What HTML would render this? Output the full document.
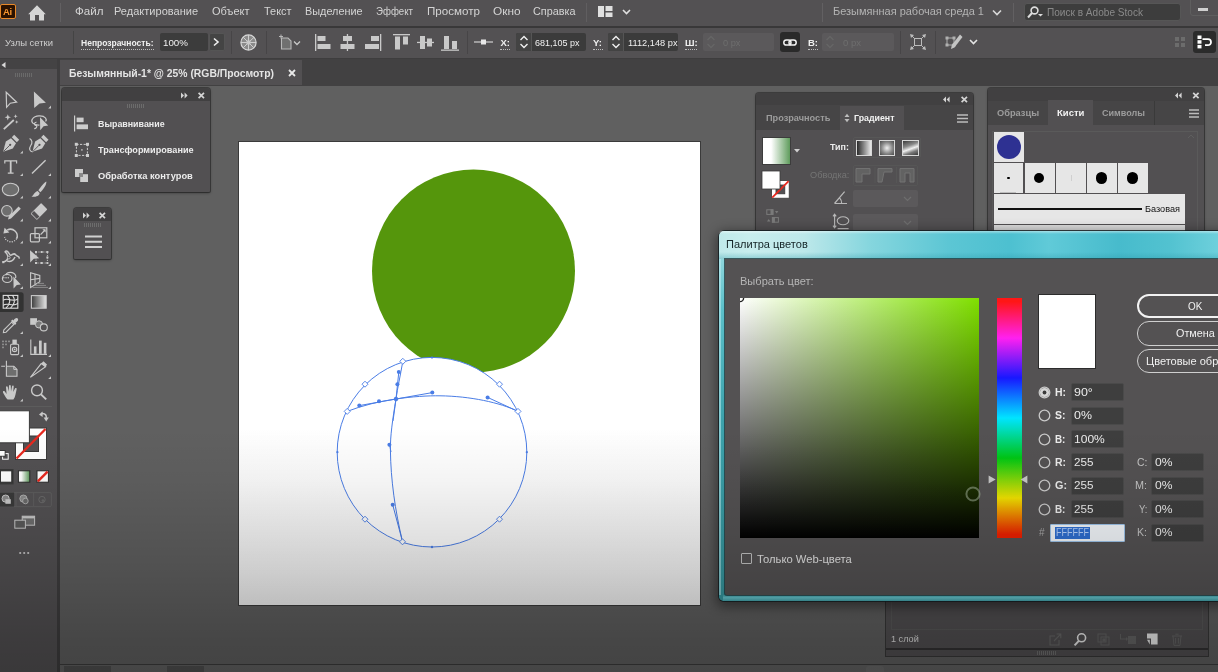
<!DOCTYPE html>
<html lang="ru">
<head>
<meta charset="utf-8">
<title>Illustrator</title>
<style>
*{box-sizing:border-box;margin:0;padding:0}
html,body{width:1218px;height:672px;overflow:hidden;background:#606060;font-family:"Liberation Sans",sans-serif;}
#root{position:relative;width:1218px;height:672px;overflow:hidden;background:#606060;color:#e6e6e6;font-size:11px;filter:blur(0.45px)}
.abs{position:absolute}
.t{position:absolute;white-space:nowrap;line-height:1;transform-origin:0 50%}
svg{position:absolute;overflow:visible}
/* bars */
#menubar{left:0;top:0;width:1218px;height:27px;background:#535153}
#menuline{left:0;top:26px;width:1218px;height:1.5px;background:#393839}
#ctrlbar{left:0;top:27.5px;width:1218px;height:31px;background:#535153}
#tabstrip{left:0;top:58.5px;width:1218px;height:27.5px;background:#424142}
#tabline{left:0;top:58px;width:1218px;height:1px;background:#3e3d3e}
#doctab{left:60px;top:60px;width:242px;height:25px;background:#525052}
#toolbar{left:0;top:69px;width:58px;height:603px;background:#535153}
#toolhead{left:0;top:59px;width:58px;height:11px;background:#444344}
#tooledge{left:57px;top:59px;width:3px;height:613px;background:#3f3e3f}
.mi{top:6px;font-size:11.5px;color:#d4d4d4}
.sep{position:absolute;width:1px;background:#474547}
.fld{position:absolute;background:#3c3c3c;border-radius:2px}
.fldd{position:absolute;background:#5b595b;border-radius:2px}
</style>
</head>
<body>
<div id="root">

<!-- ===== canvas & artboard ===== -->
<div class="abs" id="artboard" style="left:238px;top:141px;width:463px;height:465px;background:#3a3a3a"></div>
<div class="abs" style="left:239px;top:142px;width:461px;height:463px;background:linear-gradient(180deg,#ffffff 0px,#ffffff 288px,#f3f3f3 463px)"></div>
<svg id="art" style="left:0;top:0" width="1218" height="672" viewBox="0 0 1218 672">
  <circle cx="473.5" cy="271" r="101.5" fill="#55960c"/>
  <circle cx="432" cy="452.2" r="94.8" fill="#ffffff"/>
  <g fill="none" stroke="#4a7de6" stroke-width="1">
    <circle cx="432" cy="452.2" r="94.8"/>
    <path d="M347.2 411.4 C362 405.5 380 401.2 396 399 C412 396.6 428 395.6 440 395.8 C470 396.2 500 402.5 518 411.4"/>
    <path d="M402.8 361.3 C400.5 375 397.5 388 396 399 C392.5 420 390.2 436 390.4 450 C390.8 480 395 510 402.5 541.6"/>
  </g>
  <g fill="none" stroke="#4a7de6" stroke-width="1">
    <path d="M398.8 372 L396 399 L393 421"/>
    <path d="M359.3 405.6 L396 399 L432.3 392.6"/>
    <path d="M487.6 397.4 L518 411.4"/>
    <path d="M392.7 504.7 L402.5 541.6"/>
    <path d="M389.6 444.8 L391 452"/>
  </g>
  <circle cx="398.8" cy="372" r="2" fill="#4a7de6"/><circle cx="397.4" cy="384.2" r="2" fill="#4a7de6"/><circle cx="359.3" cy="405.6" r="2" fill="#4a7de6"/><circle cx="379" cy="401.3" r="2" fill="#4a7de6"/><circle cx="396" cy="399" r="2.2" fill="#4a7de6"/><circle cx="432.3" cy="392.6" r="2" fill="#4a7de6"/><circle cx="487.6" cy="397.4" r="2" fill="#4a7de6"/><circle cx="389.4" cy="444.8" r="2" fill="#4a7de6"/><circle cx="392.7" cy="504.7" r="2" fill="#4a7de6"/>
  <circle cx="337.4" cy="452.2" r="1.1" fill="#4a7de6"/><circle cx="526.8" cy="452.2" r="1.1" fill="#4a7de6"/><circle cx="432" cy="357.6" r="1.1" fill="#4a7de6"/><circle cx="432" cy="547" r="1.2" fill="#4a7de6"/>
  <path d="M365.0 381.2 L368.0 384.2 L365.0 387.2 L362.0 384.2 Z" fill="#fff" stroke="#4a7de6" stroke-width="0.9"/><path d="M499.5 381.2 L502.5 384.2 L499.5 387.2 L496.5 384.2 Z" fill="#fff" stroke="#4a7de6" stroke-width="0.9"/><path d="M365.0 516.2 L368.0 519.2 L365.0 522.2 L362.0 519.2 Z" fill="#fff" stroke="#4a7de6" stroke-width="0.9"/><path d="M499.5 516.2 L502.5 519.2 L499.5 522.2 L496.5 519.2 Z" fill="#fff" stroke="#4a7de6" stroke-width="0.9"/><path d="M347.2 408.4 L350.2 411.4 L347.2 414.4 L344.2 411.4 Z" fill="#fff" stroke="#4a7de6" stroke-width="0.9"/><path d="M518.0 408.4 L521.0 411.4 L518.0 414.4 L515.0 411.4 Z" fill="#fff" stroke="#4a7de6" stroke-width="0.9"/><path d="M402.8 358.3 L405.8 361.3 L402.8 364.3 L399.8 361.3 Z" fill="#fff" stroke="#4a7de6" stroke-width="0.9"/><path d="M402.5 538.8 L405.5 541.8 L402.5 544.8 L399.5 541.8 Z" fill="#fff" stroke="#4a7de6" stroke-width="0.9"/>
</svg>

<!-- ===== top bars ===== -->
<div class="abs" id="menubar"></div>
<div class="abs" id="menuline"></div>
<div class="abs" id="ctrlbar"></div>
<div class="abs" id="tabstrip"></div>
<div class="abs" id="tabline"></div>
<div class="abs" id="doctab"></div>
<div class="abs" id="toolhead"></div>
<div class="abs" id="toolbar"></div>
<div class="abs" id="tooledge"></div>

<!-- ===== menu bar ===== -->
<div class="abs" style="left:-0.5px;top:4px;width:16px;height:14.5px;background:#2b1200;border:1.3px solid #e8892a;border-radius:2px"></div>
<div class="t" style="left:3px;top:6.5px;font-size:9.5px;font-weight:bold;color:#f7952e;letter-spacing:-0.3px">Ai</div>
<svg style="left:28px;top:4.5px" width="18" height="16" viewBox="0 0 18 16"><path d="M9 0.3 L0.2 9.2 H2 V15.6 H7 V10 H11 V15.6 H16 V9.2 H17.8 Z" fill="#d6d6d6"/></svg>
<div class="sep" style="left:60px;top:3px;height:19px;background:#626062"></div>
<div class="sep" style="left:586px;top:3px;height:19px;background:#605e60"></div>
<div class="t mi" id="m1" style="left:75.0px;transform:scaleX(1.008)">Файл</div>
<div class="t mi" id="m2" style="left:114.0px;transform:scaleX(0.959)">Редактирование</div>
<div class="t mi" id="m3" style="left:211.5px;transform:scaleX(0.957)">Объект</div>
<div class="t mi" id="m4" style="left:263.5px;transform:scaleX(0.950)">Текст</div>
<div class="t mi" id="m5" style="left:304.5px;transform:scaleX(0.944)">Выделение</div>
<div class="t mi" id="m6" style="left:376.0px;transform:scaleX(0.841)">Эффект</div>
<div class="t mi" id="m7" style="left:427.0px;transform:scaleX(1.009)">Просмотр</div>
<div class="t mi" id="m8" style="left:492.5px;transform:scaleX(1.029)">Окно</div>
<div class="t mi" id="m9" style="left:532.5px;transform:scaleX(0.942)">Справка</div>
<svg style="left:598px;top:6px" width="40" height="12" viewBox="0 0 40 12"><rect x="0" y="0" width="6" height="11" fill="#e0e0e0"/><rect x="7.5" y="0" width="7" height="5" fill="#e0e0e0"/><rect x="7.5" y="6.5" width="7" height="4.5" fill="#e0e0e0"/><path d="M25 4 L28.5 7.5 L32 4" fill="none" stroke="#e0e0e0" stroke-width="1.6"/></svg>
<div class="sep" style="left:822px;top:3px;height:19px;background:#626062"></div>
<div class="t mi" id="ws" style="left:833.0px;color:#b4b4b4;transform:scaleX(0.954)">Безымянная рабочая среда 1</div>
<svg style="left:992px;top:9px" width="10" height="8" viewBox="0 0 10 8"><path d="M1 1.5 L5 5.5 L9 1.5" fill="none" stroke="#d8d8d8" stroke-width="1.6"/></svg>
<div class="sep" style="left:1013px;top:3px;height:19px;background:#626062"></div>
<div class="abs" style="left:1024px;top:3px;width:157px;height:18px;background:#3d3d3d;border:1px solid #565656;border-radius:3px"></div>
<svg style="left:1027px;top:6px" width="18" height="13" viewBox="0 0 18 13"><circle cx="7.5" cy="4.5" r="3.4" fill="none" stroke="#dcdcdc" stroke-width="1.6"/><path d="M5 7 L1 11.5" stroke="#dcdcdc" stroke-width="2"/><path d="M11 8 H16 L13.5 10.5 Z" fill="#dcdcdc"/></svg>
<div class="t" id="srch" style="left:1046.5px;top:7px;font-size:11px;color:#8a8a8a;transform:scaleX(0.916)">Поиск в Adobe Stock</div>
<div class="abs" style="left:1190px;top:-3px;width:32px;height:19px;border:1px solid #5e5e5e;border-radius:3px"></div>
<div class="abs" style="left:1198px;top:8px;width:10px;height:3px;background:#cfcfcf"></div>

<!-- ===== control bar ===== -->
<div class="t" id="c_uz" style="left:5.0px;top:38px;font-size:9.5px;color:#cfcfcf;transform:scaleX(0.994)">Узлы сетки</div>
<div class="sep" style="left:73px;top:31px;height:23px;background:#444"></div>
<div class="t" id="c_op" style="left:81.0px;top:38px;font-size:9.5px;color:#f0f0f0;font-weight:bold;transform:scaleX(0.897)">Непрозрачность:</div>
<div class="abs" style="left:81px;top:49px;width:73px;height:1px;border-top:1px dotted #bdbdbd"></div>
<div class="fld" style="left:160px;top:33px;width:48px;height:18px"></div>
<div class="t" id="c_100" style="left:163.0px;top:38px;font-size:9.5px;color:#f0f0f0;transform:scaleX(1.028)">100%</div>
<div class="fld" style="left:209px;top:33px;width:16px;height:18px;background:#444;border:1px solid #555"></div>
<svg style="left:212px;top:37px" width="8" height="10" viewBox="0 0 8 10"><path d="M2 1.5 L6 5 L2 8.5" fill="none" stroke="#efefef" stroke-width="1.6"/></svg>
<div class="sep" style="left:231px;top:31px;height:23px"></div>
<svg style="left:240px;top:34px" width="17" height="17" viewBox="0 0 17 17"><circle cx="8.5" cy="8.5" r="7.6" fill="#8b8b8b" stroke="#d8d8d8" stroke-width="1.2"/><g stroke="#d6d6d6" stroke-width="0.9"><path d="M8.5 8.5 L8.5 1"/><path d="M8.5 8.5 L14 3.3"/><path d="M8.5 8.5 L16 8.5"/><path d="M8.5 8.5 L13.8 13.8"/><path d="M8.5 8.5 L8.5 16"/><path d="M8.5 8.5 L3.2 13.8"/><path d="M8.5 8.5 L1 8.5"/><path d="M8.5 8.5 L3.2 3.2"/></g><circle cx="8.5" cy="8.5" r="2.3" fill="#c9c9c9"/></svg>
<div class="sep" style="left:266px;top:31px;height:23px"></div>
<svg style="left:278px;top:34px" width="24" height="16" viewBox="0 0 24 16"><path d="M3.5 4 H10 L13 7 V15 H3.5 Z" fill="#707070" stroke="#b8b8b8" stroke-width="1.1"/><path d="M1 2.5 H5 M3 0.5 V4.5" stroke="#b8b8b8" stroke-width="1"/><path d="M16 7.5 L19 10.5 L22 7.5" fill="none" stroke="#c8c8c8" stroke-width="1.3"/></svg>
<!-- align icons -->
<svg style="left:314px;top:33px" width="150" height="19" viewBox="0 0 150 19" fill="#c9c9c9">
 <rect x="1" y="1" width="1.3" height="17"/><rect x="3.5" y="3" width="8" height="5"/><rect x="3.5" y="11" width="13" height="5"/>
 <rect x="32.8" y="1" width="1.3" height="17"/><rect x="29" y="3" width="9" height="5"/><rect x="26.5" y="11" width="14" height="5"/>
 <rect x="66" y="1" width="1.3" height="17"/><rect x="57" y="3" width="8" height="5"/><rect x="51" y="11" width="14" height="5"/>
 <rect x="79" y="1" width="17" height="1.3"/><rect x="81" y="3.5" width="5" height="13"/><rect x="89" y="3.5" width="5" height="8"/>
 <rect x="103" y="8.8" width="17" height="1.3"/><rect x="106" y="3" width="5" height="13"/><rect x="113" y="5.5" width="5" height="8"/>
 <rect x="127" y="16.5" width="18" height="1.3"/><rect x="130" y="3" width="5" height="13"/><rect x="138" y="8" width="5" height="8"/>
</svg>
<div class="sep" style="left:467px;top:31px;height:23px"></div>
<svg style="left:474px;top:38px" width="19" height="8" viewBox="0 0 19 8"><rect x="0" y="3.4" width="19" height="1.2" fill="#cfcfcf"/><rect x="7" y="1.5" width="5" height="5" fill="#e8e8e8"/></svg>
<div class="t" id="c_x" style="left:500.5px;top:38px;font-size:9.5px;font-weight:bold;color:#f0f0f0">X:</div>
<div class="abs" style="left:500px;top:49px;width:10px;height:1px;border-top:1px dotted #bdbdbd"></div>
<div class="fld" style="left:516px;top:33px;width:70px;height:18px;background:#3b3b3b"></div>
<div class="abs" style="left:516px;top:33px;width:16px;height:18px;background:#434343;border-radius:2px 0 0 2px;border-right:1px solid #555"></div>
<svg style="left:519px;top:35px" width="10" height="14" viewBox="0 0 10 14"><path d="M1.5 5 L5 1.5 L8.5 5 M1.5 9 L5 12.5 L8.5 9" fill="none" stroke="#f0f0f0" stroke-width="1.4"/></svg>
<div class="t" id="c_xv" style="left:535.0px;top:38px;font-size:9.5px;color:#f0f0f0;transform:scaleX(0.946)">681,105 px</div>
<div class="t" id="c_y" style="left:593px;top:38px;font-size:9.5px;font-weight:bold;color:#f0f0f0">Y:</div>
<div class="abs" style="left:593px;top:49px;width:10px;height:1px;border-top:1px dotted #bdbdbd"></div>
<div class="fld" style="left:608px;top:33px;width:70px;height:18px;background:#3b3b3b"></div>
<div class="abs" style="left:608px;top:33px;width:16px;height:18px;background:#434343;border-radius:2px 0 0 2px;border-right:1px solid #555"></div>
<svg style="left:611px;top:35px" width="10" height="14" viewBox="0 0 10 14"><path d="M1.5 5 L5 1.5 L8.5 5 M1.5 9 L5 12.5 L8.5 9" fill="none" stroke="#f0f0f0" stroke-width="1.4"/></svg>
<div class="t" id="c_yv" style="left:627.5px;top:38px;font-size:9.5px;color:#f0f0f0;transform:scaleX(0.973)">1112,148 px</div>
<div class="t" id="c_w" style="left:685px;top:38px;font-size:9.5px;font-weight:bold;color:#f0f0f0">Ш:</div>
<div class="abs" style="left:685px;top:49px;width:12px;height:1px;border-top:1px dotted #bdbdbd"></div>
<div class="fldd" style="left:703px;top:33px;width:71px;height:18px"></div>
<svg style="left:706px;top:35px" width="10" height="14" viewBox="0 0 10 14"><path d="M1.5 5 L5 1.5 L8.5 5 M1.5 9 L5 12.5 L8.5 9" fill="none" stroke="#666" stroke-width="1.3"/></svg>
<div class="t" id="c_wv" style="left:723.0px;top:38px;font-size:9.5px;color:#6e6e6e;transform:scaleX(0.974)">0 px</div>
<div class="abs" style="left:780px;top:32px;width:20px;height:20px;background:#2a2a2a;border-radius:3px"></div>
<svg style="left:783px;top:38.5px" width="14" height="7" viewBox="0 0 14 7"><rect x="0.8" y="0.9" width="7.2" height="5.2" rx="2.6" fill="none" stroke="#f2f2f2" stroke-width="1.5"/><rect x="6" y="0.9" width="7.2" height="5.2" rx="2.6" fill="none" stroke="#f2f2f2" stroke-width="1.5"/></svg>
<div class="t" id="c_h" style="left:808px;top:38px;font-size:9.5px;font-weight:bold;color:#f0f0f0">В:</div>
<div class="abs" style="left:808px;top:49px;width:10px;height:1px;border-top:1px dotted #bdbdbd"></div>
<div class="fldd" style="left:822px;top:33px;width:72px;height:18px"></div>
<svg style="left:825px;top:35px" width="10" height="14" viewBox="0 0 10 14"><path d="M1.5 5 L5 1.5 L8.5 5 M1.5 9 L5 12.5 L8.5 9" fill="none" stroke="#666" stroke-width="1.3"/></svg>
<div class="t" id="c_hv" style="left:842.5px;top:38px;font-size:9.5px;color:#6e6e6e;transform:scaleX(1.002)">0 px</div>
<div class="sep" style="left:900px;top:31px;height:23px"></div>
<svg style="left:910px;top:34px" width="16" height="16" viewBox="0 0 16 16"><rect x="4.5" y="4.5" width="7" height="7" fill="none" stroke="#bcbcbc" stroke-width="1"/><g fill="#bcbcbc"><path d="M0 0 L4 1 L1 4 Z"/><path d="M16 0 L12 1 L15 4 Z"/><path d="M0 16 L4 15 L1 12 Z"/><path d="M16 16 L12 15 L15 12 Z"/></g><g stroke="#bcbcbc" stroke-width="1"><path d="M1.5 1.5 L4.5 4.5 M14.5 1.5 L11.5 4.5 M1.5 14.5 L4.5 11.5 M14.5 14.5 L11.5 11.5"/></g></svg>
<div class="sep" style="left:935px;top:31px;height:23px"></div>
<svg style="left:945px;top:34px" width="34" height="17" viewBox="0 0 34 17"><rect x="2" y="4" width="7" height="7" fill="none" stroke="#b0b0b0" stroke-width="1"/><g fill="#b0b0b0"><rect x="0.5" y="2.5" width="3" height="3"/><rect x="7.5" y="2.5" width="3" height="3"/><rect x="0.5" y="9.5" width="3" height="3"/><rect x="7.5" y="9.5" width="3" height="3"/></g><path d="M15 0.5 L17.5 3 L9.5 13.5 L6 15 L6.8 11 Z" fill="#c4c4c4"/><path d="M25 6 L28.5 9.5 L32 6" fill="none" stroke="#e4e4e4" stroke-width="1.6"/></svg>
<svg style="left:1174px;top:36px" width="12" height="12" viewBox="0 0 12 12" fill="#6c6c6c"><rect x="1" y="1" width="4" height="4"/><rect x="7" y="1" width="4" height="4"/><rect x="1" y="7" width="4" height="4"/><rect x="7" y="7" width="4" height="4"/></svg>
<div class="abs" style="left:1193px;top:31px;width:23px;height:22px;background:#2b2b2b;border-radius:3px"></div>
<svg style="left:1197px;top:35px" width="16" height="14" viewBox="0 0 16 14"><rect x="0.5" y="0.5" width="4" height="3.5" fill="#fff"/><rect x="0.5" y="5.2" width="4" height="3.5" fill="#fff"/><rect x="0.5" y="9.9" width="4" height="3.5" fill="#fff"/><path d="M5.5 4.2 H11 A3 3 0 0 1 11 10.2 H8" fill="none" stroke="#fff" stroke-width="1.8"/></svg>
<!-- tab -->
<div class="t" id="tabt" style="left:68.5px;top:68px;font-size:10.5px;font-weight:bold;color:#e4e4e4;transform:scaleX(0.987)">Безымянный-1* @ 25% (RGB/Просмотр)</div>
<svg style="left:288px;top:69px" width="8" height="8" viewBox="0 0 8 8"><path d="M1 1 L7 7 M7 1 L1 7" stroke="#e8e8e8" stroke-width="1.8"/></svg>
<svg style="left:1px;top:62px" width="5" height="6" viewBox="0 0 5 6"><path d="M4.5 0 L0.5 3 L4.5 6 Z" fill="#d8d8d8"/></svg>
<div class="abs" style="left:15px;top:73px;width:18px;height:4px;background:repeating-linear-gradient(90deg,#6a6a6a 0 1px,transparent 1px 2px)"></div>

<!-- ===== tools ===== -->
<svg id="tools" style="left:0;top:0" width="60" height="672" viewBox="0 0 60 672">
<g fill="none" stroke="#c9c9c9" stroke-width="1.2" stroke-linejoin="miter">
 <!-- selection (outline) -->
 <path d="M6.2 92.3 L6.6 107.3 L10.3 103.2 L16.6 102.2 Z"/>
</g>
<!-- direct selection -->
<path d="M33.9 91.6 L34.2 108 L39.6 103.4 L45.9 102.7 Z" fill="#c9c9c9"/>
<path d="M51 105.60000000000001 V108.4 H48.2 Z" fill="#c9c9c9"/>
<!-- magic wand -->
<path d="M3.8 129.2 L13.8 120" stroke="#c9c9c9" stroke-width="1.8"/>
<path d="M7.8 114.2 L8.7 116.6 L11 117.3 L8.7 118.1 L7.8 120.4 L6.9 118.1 L4.6 117.3 L6.9 116.6 Z" fill="#c9c9c9"/>
<path d="M15.6 114.3 L16.2 115.8 L17.7 116.3 L16.2 116.8 L15.6 118.3 L15 116.8 L13.5 116.3 L15 115.8 Z" fill="#c9c9c9"/>
<path d="M16.7 120.2 L17.2 121.5 L18.5 122 L17.2 122.5 L16.7 123.8 L16.2 122.5 L14.9 122 L16.2 121.5 Z" fill="#c9c9c9"/>
<!-- lasso -->
<g fill="none" stroke="#c9c9c9" stroke-width="1.2">
 <path d="M39.5 125 C33 125.5 30.5 121.5 32.5 118.8 C35 115.2 43 114.8 45.5 118 C46.5 119.2 46.3 120.5 45.6 121.5"/>
 <path d="M36.5 122.3 A1.6 1.6 0 1 0 36.6 125.4 C37.3 127 36 128.6 34.2 128.6"/>
</g>
<path d="M40 117.2 L40.2 130.2 L43.6 126.2 L48.2 125.6 Z" fill="#c9c9c9"/>
<!-- pen -->
<g fill="#c9c9c9">
 <path d="M3.2 151.8 L5.8 141.5 L11 138.2 L16 143.2 L12.8 148.6 Z"/>
 <path d="M11.8 137.2 L14.2 134.8 L19.2 139.8 L16.8 142.2 Z"/>
 <path d="M32.5 151.8 L35.1 141.5 L40.3 138.2 L45.3 143.2 L42.1 148.6 Z"/>
 <path d="M41.1 137.2 L43.5 134.8 L48.5 139.8 L46.1 142.2 Z"/>
</g>
<path d="M3.6 151.4 L9.8 145.2" stroke="#535153" stroke-width="0.9"/><circle cx="10.2" cy="144.8" r="1.1" fill="#535153"/>
<path d="M32.9 151.4 L39.1 145.2" stroke="#535153" stroke-width="0.9"/><circle cx="39.5" cy="144.8" r="1.1" fill="#535153"/>
<path d="M29.6 138.5 C32.3 140 32.6 143 30.8 145.5 C28.8 148.5 29.4 151.6 32.6 151.9" fill="none" stroke="#c9c9c9" stroke-width="1.2"/>
<path d="M22.9 150.79999999999998 V153.6 H20.099999999999998 Z" fill="#c9c9c9"/>
<!-- type -->
<path d="M4.2 160.3 H17.2 V163.6 H16 V161.6 H11.6 V172.4 H13.6 V173.7 H7.8 V172.4 H9.8 V161.6 H5.4 V163.6 H4.2 Z" fill="#c9c9c9"/>
<path d="M22.9 173.2 V176 H20.099999999999998 Z" fill="#c9c9c9"/>
<!-- line -->
<path d="M32 173.5 L45.6 160.2" stroke="#c9c9c9" stroke-width="1.4"/>
<path d="M51 173.2 V176 H48.2 Z" fill="#c9c9c9"/>
<!-- ellipse -->
<ellipse cx="10.5" cy="189.5" rx="8.2" ry="6.3" fill="#6e6e6e" stroke="#c9c9c9" stroke-width="1.1"/>
<path d="M22.9 195.79999999999998 V198.6 H20.099999999999998 Z" fill="#c9c9c9"/>
<!-- brush -->
<path d="M46.3 181.5 C47 184 43 190 40.3 192.2 L38.4 190.3 C40.5 187 44.5 182.5 46.3 181.5 Z" fill="#c9c9c9"/>
<path d="M37.6 191 L39.6 193 C39.5 196 35.5 197.2 31.4 196.8 C33.6 195.6 34.2 192 37.6 191 Z" fill="#c9c9c9"/>
<path d="M51 195.79999999999998 V198.6 H48.2 Z" fill="#c9c9c9"/>
<!-- shaper -->
<circle cx="6.9" cy="210.8" r="5.3" fill="#6e6e6e" stroke="#c9c9c9" stroke-width="1.1"/>
<path d="M8 219.6 L8.8 216.4 L18.6 206.6 L20.8 208.8 L11 218.6 Z" fill="#c9c9c9"/>
<path d="M22.9 218.6 V221.4 H20.099999999999998 Z" fill="#c9c9c9"/>
<!-- eraser -->
<g transform="rotate(-45 39 211.5)"><rect x="31.5" y="207" width="15" height="9" rx="1" fill="#c9c9c9"/><rect x="32.2" y="207.7" width="3.6" height="7.6" fill="#535153"/></g>
<path d="M51 218.6 V221.4 H48.2 Z" fill="#c9c9c9"/>
<!-- rotate -->
<path d="M7.2 230.2 A6.6 6.6 0 0 1 16.6 238.6" fill="none" stroke="#c9c9c9" stroke-width="1.5"/>
<path d="M16.6 238.6 A6.6 6.6 0 0 1 4.6 237" fill="none" stroke="#c9c9c9" stroke-width="1.3" stroke-dasharray="1.1 1.3"/>
<path d="M3.4 233.6 L4.6 227.8 L9.4 232.6 Z" fill="#c9c9c9"/>
<path d="M22.9 240.79999999999998 V243.6 H20.099999999999998 Z" fill="#c9c9c9"/>
<!-- scale -->
<g fill="none" stroke="#c9c9c9" stroke-width="1.2"><rect x="35" y="227.8" width="11.8" height="10"/><rect x="30.4" y="233.6" width="9" height="8.2" rx="1"/><path d="M40.6 234.6 L45 230"/></g>
<path d="M45.6 229.2 V232.4 L42.4 229.2 Z" fill="#c9c9c9"/>
<path d="M51 240.79999999999998 V243.6 H48.2 Z" fill="#c9c9c9"/>
<!-- width/warp -->
<g fill="none" stroke="#c9c9c9" stroke-width="1.5"><path d="M3 262 C7 261.5 9 258 7.2 254.5 C6 252 4.8 252.6 5.2 251.5 C6 250.6 8 251 9.4 254 C11 257.5 13.5 251.5 15.6 254.8 M15.6 254.8 C17.5 257.2 19 255 19.4 258.6 M7 260.8 C10.5 262.5 13.5 260.5 15 257"/></g>
<circle cx="8.8" cy="257.6" r="1.4" fill="#535153" stroke="#c9c9c9" stroke-width="0.8"/>
<rect x="2.2" y="261" width="2.2" height="2.2" fill="#c9c9c9"/>
<path d="M22.9 263.2 V266 H20.099999999999998 Z" fill="#c9c9c9"/>
<!-- free transform -->
<path d="M30 250.2 L30.2 262.4 L33.8 258.8 L39.2 258.2 Z" fill="#c9c9c9"/>
<rect x="36" y="252" width="11.4" height="11" fill="none" stroke="#c9c9c9" stroke-width="0.9" stroke-dasharray="1.2 1.2"/>
<g fill="#c9c9c9"><rect x="35" y="251" width="2" height="2"/><rect x="46.4" y="251" width="2" height="2"/><rect x="46.4" y="262" width="2" height="2"/><rect x="35" y="262" width="2" height="2"/><rect x="40.7" y="251" width="2" height="2"/><rect x="40.7" y="262" width="2" height="2"/><rect x="46.4" y="256.5" width="2" height="2"/></g>
<path d="M51 263.2 V266 H48.2 Z" fill="#c9c9c9"/>
<!-- shape builder -->
<g fill="none" stroke="#c9c9c9" stroke-width="1.2"><ellipse cx="7.2" cy="278.5" rx="4.8" ry="4"/><path d="M5.8 275 C7 271.6 13.8 271.2 15.6 275.6 C16 276.6 15.8 277.6 15.4 278.2"/><path d="M3.8 277.8 h0.1 M6 277.8 h0.1 M8.2 277.8 h0.1" stroke-width="1.4" stroke-linecap="round"/></g>
<path d="M13.4 276.6 L13.6 288.6 L16.8 285 L20.8 284.4 Z" fill="#c9c9c9"/>
<path d="M22.9 286.2 V289 H20.099999999999998 Z" fill="#c9c9c9"/>
<!-- perspective grid -->
<g fill="none" stroke="#c9c9c9" stroke-width="1.1"><path d="M30.6 272.8 V287.4 L39.8 281.6 V275.4 Z"/><path d="M35 274 V284.6 M30.6 279.8 L39.8 278.4"/></g>
<path d="M37 283.4 H44 M35 285.4 H46 M32.5 287.4 H48" stroke="#8a8a8a" stroke-width="1"/>
<path d="M51 286.2 V289 H48.2 Z" fill="#c9c9c9"/>
<!-- mesh (selected) -->
<rect x="-3" y="292.2" width="26.6" height="19.8" rx="2.5" fill="#323232"/>
<g fill="none" stroke="#dedede" stroke-width="1.1"><rect x="3.2" y="295.4" width="14.6" height="12.8"/><path d="M7.4 295.4 C11 299 10.4 304 6 308.2 M12.6 295.4 C15.6 299.5 14.6 304 10.6 308.2 M3.2 300.4 C7.5 296.6 13 303 17.8 298.8 M3.2 305.4 C7 301.6 13 307.6 17.8 303.4"/></g>
<!-- gradient -->
<defs><linearGradient id="tg" x1="0" x2="1" y1="0" y2="0"><stop offset="0" stop-color="#3c3c3c"/><stop offset="1" stop-color="#e4e4e4"/></linearGradient></defs>
<rect x="31.4" y="295.6" width="14.8" height="12.6" fill="url(#tg)" stroke="#c9c9c9" stroke-width="1.1"/>
<!-- eyedropper -->
<path d="M3.4 332.6 L3.8 330 L11.6 322.2 L13.8 324.4 L6 332.2 Z" fill="none" stroke="#c9c9c9" stroke-width="1.1"/>
<path d="M11 321 L12.4 319.6 L13.4 320.6 C14.6 318 17 317.4 17.8 318.6 C18.8 319.8 17.6 321.8 15.6 322.8 L16.4 323.6 L15 325 Z" fill="#c9c9c9"/>
<path d="M22.9 331.2 V334 H20.099999999999998 Z" fill="#c9c9c9"/>
<!-- blend -->
<rect x="30.2" y="318.2" width="6.8" height="6.6" fill="#c9c9c9"/>
<circle cx="39" cy="324.4" r="3.6" fill="#7a7a7a" stroke="#c9c9c9" stroke-width="1"/>
<circle cx="43.8" cy="327.4" r="3.5" fill="#535153" stroke="#c9c9c9" stroke-width="1.1"/>
<!-- symbol sprayer -->
<g fill="none" stroke="#c9c9c9" stroke-width="1.1"><rect x="10.6" y="344.2" width="8" height="10.4" rx="1"/><circle cx="14.6" cy="349.4" r="2.2"/></g>
<rect x="12.4" y="339.6" width="4.4" height="4.4" fill="#c9c9c9"/><circle cx="14.6" cy="349.4" r="0.9" fill="#c9c9c9"/>
<g fill="#9a9a9a"><rect x="2.2" y="340.6" width="1.6" height="1.6"/><rect x="5.2" y="340.6" width="1.6" height="1.6"/><rect x="8.2" y="340.6" width="1.6" height="1.6"/><rect x="2.2" y="343.6" width="1.6" height="1.6"/><rect x="5.2" y="343.6" width="1.6" height="1.6"/><rect x="2.2" y="346.6" width="1.6" height="1.6"/></g>
<path d="M22.9 354.2 V357 H20.099999999999998 Z" fill="#c9c9c9"/>
<!-- graph -->
<path d="M30.8 339.6 V354.4 H47" fill="none" stroke="#c9c9c9" stroke-width="1.1"/>
<g fill="#c9c9c9"><rect x="33.9" y="346.4" width="2.6" height="7.4"/><rect x="39" y="340.6" width="2.7" height="13.2"/><rect x="43.8" y="342.8" width="2.6" height="11"/></g>
<path d="M51 354.2 V357 H48.2 Z" fill="#c9c9c9"/>
<!-- artboard -->
<path d="M6.4 366.2 H13.8 L17 369.4 V376.2 H6.4 Z" fill="#6e6e6e" stroke="#c9c9c9" stroke-width="1.1"/>
<path d="M13.8 366.2 V369.4 H17" fill="none" stroke="#c9c9c9" stroke-width="1"/>
<path d="M6.4 360.8 V366 M1.2 366.2 H5" stroke="#c9c9c9" stroke-width="1.1"/>
<!-- slice -->
<path d="M30.4 377.4 L41.2 363.6 L45.6 366.8 Z" fill="none" stroke="#c9c9c9" stroke-width="1.1"/>
<path d="M41.2 363.6 L43.4 361.2 L47 364.4 L45.6 366.8 Z" fill="#c9c9c9"/>
<path d="M51 376.2 V379 H48.2 Z" fill="#c9c9c9"/>
<!-- hand -->
<path d="M7.6 399.6 C5.6 397.4 4.2 394.4 3 392.4 C2.6 391.2 4 390.6 4.8 391.6 L6.6 394 L6 387.2 C6 386 7.6 386 7.8 387.2 L8.6 391.6 L9 385.8 C9.1 384.6 10.7 384.6 10.8 385.8 L11 391.4 L12 386.4 C12.2 385.2 13.8 385.4 13.7 386.7 L13.2 392 L15 388.6 C15.6 387.6 17 388.2 16.6 389.4 C15.8 392.4 15.4 397 13.4 399.6 Z" fill="#c9c9c9"/>
<path d="M22.9 398.8 V401.6 H20.099999999999998 Z" fill="#c9c9c9"/>
<!-- zoom -->
<circle cx="37" cy="390.4" r="5.4" fill="none" stroke="#c9c9c9" stroke-width="1.4"/>
<path d="M41 394.4 L46.2 399.4" stroke="#c9c9c9" stroke-width="2"/>
<!-- separator -->
<path d="M0 406.5 H52" stroke="#5c5c5c" stroke-width="1"/>
<!-- swap arrow -->
<path d="M41.4 413.6 C45.4 412.8 47 415.6 46.2 419" fill="none" stroke="#c9c9c9" stroke-width="1.6"/>
<path d="M39 414.6 L42.6 411.4 V417 Z" fill="#c9c9c9"/><path d="M43.6 417.6 H48.8 L46.2 421.4 Z" fill="#c9c9c9"/>
<!-- stroke box -->
<rect x="15.5" y="428" width="31" height="31.5" fill="#ffffff" stroke="#3a3a3a" stroke-width="1"/>
<rect x="23.5" y="436" width="15" height="15.5" fill="#535153" stroke="#3a3a3a" stroke-width="1"/>
<path d="M16.5 458.5 L45.5 429" stroke="#e8281e" stroke-width="2.4"/>
<!-- fill box -->
<rect x="-1" y="410.8" width="30.4" height="32" fill="#ffffff" stroke="#3a3a3a" stroke-width="1"/>
<!-- default fill/stroke -->
<rect x="2.6" y="453.6" width="5.6" height="5.6" fill="#535153" stroke="#fff" stroke-width="1"/>
<rect x="-0.5" y="450.6" width="5.6" height="5.6" fill="#fff" stroke="#222" stroke-width="0.8"/>
<!-- color / gradient / none -->
<rect x="-3" y="469" width="16.6" height="15.4" fill="#3a3a3a"/>
<rect x="0.4" y="470.8" width="11.4" height="11.4" fill="#ffffff" stroke="#2a2a2a" stroke-width="1"/>
<defs><linearGradient id="sg" x1="0" x2="1" y1="0" y2="0"><stop offset="0.25" stop-color="#ffffff"/><stop offset="1" stop-color="#5c9a5a"/></linearGradient></defs>
<rect x="18.4" y="470.8" width="11.4" height="11.4" fill="url(#sg)" stroke="#2a2a2a" stroke-width="1"/>
<rect x="37" y="470.8" width="11.4" height="11.4" fill="#ffffff" stroke="#2a2a2a" stroke-width="1"/>
<path d="M37.8 481.4 L47.6 471.6" stroke="#e8281e" stroke-width="2.4"/>
<!-- draw modes -->
<rect x="-3" y="492.6" width="54.4" height="14" rx="1.5" fill="none" stroke="#5e5e5e" stroke-width="1"/>
<rect x="-3" y="492.6" width="17" height="14" fill="#3a3a3a"/>
<path d="M16 493 V506 M33.6 493 V506" stroke="#5e5e5e" stroke-width="1"/>
<circle cx="5.6" cy="498.6" r="3.6" fill="#8a8a8a" stroke="#c9c9c9" stroke-width="1"/><rect x="5.4" y="499.2" width="5.4" height="4.6" fill="#c9c9c9"/>
<circle cx="23.4" cy="498.6" r="3.6" fill="#8a8a8a" stroke="#b0b0b0" stroke-width="1"/><circle cx="25.4" cy="501" r="2.8" fill="#6a6a6a" stroke="#b0b0b0" stroke-width="0.9"/>
<circle cx="42" cy="499.6" r="3.2" fill="none" stroke="#6a6a6a" stroke-width="1"/><circle cx="43" cy="500.6" r="1.4" fill="#666"/>
<!-- screen mode -->
<rect x="22.2" y="516.2" width="12.4" height="9" fill="#6e6e6e" stroke="#c9c9c9" stroke-width="1"/><rect x="22.2" y="516.2" width="12.4" height="2.2" fill="#c9c9c9"/>
<rect x="14.8" y="520.2" width="10.6" height="8" fill="#5a5a5a" stroke="#c9c9c9" stroke-width="1"/>
<!-- dots -->
<circle cx="20.2" cy="553" r="1.1" fill="#c9c9c9"/><circle cx="24.2" cy="553" r="1.1" fill="#c9c9c9"/><circle cx="28.2" cy="553" r="1.1" fill="#c9c9c9"/>
</svg>

<!-- ===== left floating panels ===== -->
<div class="abs" style="left:62px;top:88px;width:148px;height:104px;background:#525052;border-radius:3px 3px 1px 1px;box-shadow:0 1px 3px rgba(0,0,0,.45), 0 0 0 1px rgba(40,40,40,.55)"></div>
<div class="abs" style="left:62px;top:88px;width:148px;height:13px;background:#414041;border-radius:3px 3px 0 0"></div>
<svg style="left:181px;top:92px" width="26" height="7" viewBox="0 0 26 7"><path d="M0 0.5 L3 3.5 L0 6.5 Z M3.6 0.5 L6.6 3.5 L3.6 6.5 Z" fill="#d4d4d4"/><path d="M17.6 0.8 L23 6.2 M23 0.8 L17.6 6.2" stroke="#d4d4d4" stroke-width="1.7"/></svg>
<div class="abs" style="left:127px;top:104px;width:18px;height:4px;background:repeating-linear-gradient(90deg,#6c6c6c 0 1px,transparent 1px 2px)"></div>
<svg style="left:73px;top:115px" width="18" height="70" viewBox="0 0 18 70">
 <g fill="#cdcdcd"><rect x="1" y="0.5" width="1.2" height="16"/><rect x="3.6" y="2.6" width="7" height="4.6"/><rect x="3.6" y="9.4" width="11.4" height="4.8"/></g>
 <rect x="3.4" y="29.4" width="11" height="11" fill="none" stroke="#cdcdcd" stroke-width="1" stroke-dasharray="2.2 1.4"/>
 <g fill="#cdcdcd"><rect x="1.8" y="27.8" width="3" height="3"/><rect x="13" y="27.8" width="3" height="3"/><rect x="1.8" y="39" width="3" height="3"/><rect x="13" y="39" width="3" height="3"/><rect x="8.2" y="34.2" width="1.4" height="1.4"/></g>
 <g><rect x="2" y="54" width="8" height="8" fill="#cdcdcd"/><rect x="6.6" y="58.6" width="9" height="9" fill="#cdcdcd" stroke="#525052" stroke-width="1.2"/><rect x="6" y="58" width="4" height="4" fill="#8a8a8a"/></g>
</svg>
<div class="t" id="lp1" style="left:98.4px;top:119.5px;font-size:9px;font-weight:bold;color:#ececec;transform:scaleX(0.985)">Выравнивание</div>
<div class="t" id="lp2" style="left:98.4px;top:145.5px;font-size:9px;font-weight:bold;color:#ececec;transform:scaleX(1.014)">Трансформирование</div>
<div class="t" id="lp3" style="left:98.4px;top:172px;font-size:9px;font-weight:bold;color:#ececec;transform:scaleX(1.034)">Обработка контуров</div>
<div class="abs" style="left:74px;top:208px;width:37px;height:51px;background:#525052;border-radius:3px 3px 1px 1px;box-shadow:0 1px 3px rgba(0,0,0,.45), 0 0 0 1px rgba(40,40,40,.55)"></div>
<div class="abs" style="left:74px;top:208px;width:37px;height:13px;background:#414041;border-radius:3px 3px 0 0"></div>
<svg style="left:83px;top:212px" width="24" height="7" viewBox="0 0 24 7"><path d="M0 0.5 L3 3.5 L0 6.5 Z M3.6 0.5 L6.6 3.5 L3.6 6.5 Z" fill="#d4d4d4"/><path d="M16.6 0.8 L22 6.2 M22 0.8 L16.6 6.2" stroke="#d4d4d4" stroke-width="1.7"/></svg>
<div class="abs" style="left:84px;top:223px;width:18px;height:4px;background:repeating-linear-gradient(90deg,#6c6c6c 0 1px,transparent 1px 2px)"></div>
<svg style="left:85px;top:235px" width="17" height="14" viewBox="0 0 17 14"><path d="M0 1.5 H17 M0 6.8 H17 M0 12.1 H17" stroke="#d0d0d0" stroke-width="2"/></svg>

<!-- ===== gradient panel ===== -->
<div class="abs" style="left:756px;top:92.5px;width:217px;height:300px;background:#525052;border-radius:3px 3px 0 0;box-shadow:0 1px 3px rgba(0,0,0,.45), 0 0 0 1px rgba(40,40,40,.55)"></div>
<div class="abs" style="left:756px;top:92.5px;width:217px;height:37.5px;background:#464546;border-radius:3px 3px 0 0"></div>
<div class="abs" style="left:756px;top:92.5px;width:217px;height:12.5px;background:#414041;border-radius:3px 3px 0 0"></div>
<div class="abs" style="left:840px;top:106px;width:64px;height:25px;background:#525052"></div>
<svg style="left:943px;top:96px" width="26" height="7" viewBox="0 0 26 7"><path d="M3 0.5 L0 3.5 L3 6.5 Z M6.6 0.5 L3.6 3.5 L6.6 6.5 Z" fill="#d4d4d4"/><path d="M18.6 0.8 L24 6.2 M24 0.8 L18.6 6.2" stroke="#d4d4d4" stroke-width="1.7"/></svg>
<div class="t" id="gp1" style="left:765.5px;top:112.5px;font-size:9.5px;font-weight:bold;color:#9c9c9c;transform:scaleX(0.966)">Прозрачность</div>
<svg style="left:844px;top:113px" width="6" height="10" viewBox="0 0 6 10"><path d="M0.5 4 L3 0.8 L5.5 4 Z M0.5 6 L3 9.2 L5.5 6 Z" fill="#bdbdbd"/></svg>
<div class="t" id="gp2" style="left:854.0px;top:112.5px;font-size:9.5px;font-weight:bold;color:#f2f2f2;transform:scaleX(0.928)">Градиент</div>
<svg style="left:956.5px;top:113.5px" width="11" height="9" viewBox="0 0 11 9"><path d="M0 1 H11 M0 4.5 H11 M0 8 H11" stroke="#bcbcbc" stroke-width="1.3"/></svg>
<div class="abs" style="left:762px;top:137px;width:29px;height:28px;background:linear-gradient(90deg,#ffffff 0%,#ffffff 30%,#5f9c5c 100%);border:1px solid #3c3c3c"></div>
<svg style="left:793.5px;top:148.5px" width="6" height="4" viewBox="0 0 6 4"><path d="M0 0 H6 L3 3.6 Z" fill="#d0d0d0"/></svg>
<svg style="left:760px;top:168px" width="34" height="34" viewBox="0 0 34 34">
 <rect x="11.6" y="12.6" width="17.6" height="17.6" fill="#fff" stroke="#3a3a3a" stroke-width="0.8"/><rect x="16" y="17" width="8.8" height="8.8" fill="#525052" stroke="#3a3a3a" stroke-width="0.8"/><path d="M12.2 29.6 L28.6 13.2" stroke="#e8281e" stroke-width="1.8"/>
 <rect x="2" y="3" width="18" height="18" fill="#fff" stroke="#3a3a3a" stroke-width="0.8"/>
</svg>
<svg style="left:766px;top:209px" width="16" height="15" viewBox="0 0 16 15" fill="none" stroke="#7a7a7a" stroke-width="1"><rect x="0.8" y="0.8" width="6" height="4.6"/><rect x="5" y="0.8" width="2" height="4.6" fill="#7a7a7a"/><path d="M9 2 H12.4 L10.7 4.4 Z" fill="#7a7a7a" stroke="none"/><rect x="6.4" y="8.6" width="6" height="4.6"/><rect x="6.4" y="8.6" width="2" height="4.6" fill="#7a7a7a"/><path d="M1 12.4 H4.4 L2.7 10 Z" fill="#7a7a7a" stroke="none"/></svg>
<div class="t" id="gp3" style="left:829.8px;top:141.5px;font-size:9.5px;font-weight:bold;color:#ececec;transform:scaleX(0.941)">Тип:</div>
<div class="abs" style="left:853px;top:137px;width:68px;height:21px;border:1px solid #575757;border-radius:2px"></div>
<div class="abs" style="left:855.5px;top:139.5px;width:16px;height:16px;background:linear-gradient(90deg,#2a2a2a,#e8e8e8);border:1px solid #d8d8d8"></div>
<div class="abs" style="left:878.5px;top:139.5px;width:16px;height:16px;background:radial-gradient(circle,#f0f0f0 0%,#8a8a8a 55%,#4a4a4a 100%);border:1px solid #d8d8d8"></div>
<div class="abs" style="left:902px;top:139.5px;width:16.5px;height:16px;background:linear-gradient(160deg,#3a3a3a 0%,#8a8a8a 35%,#f0f0f0 55%,#7a7a7a 75%,#3c3c3c 100%);border:1px solid #d8d8d8"></div>
<div class="t" id="gp4" style="left:809.5px;top:169.5px;font-size:9.5px;color:#757575;transform:scaleX(0.966)">Обводка:</div>
<div class="abs" style="left:852.5px;top:164.5px;width:65px;height:21px;border:1px solid #565656;border-radius:2px"></div>
<svg style="left:855px;top:167px" width="62" height="16" viewBox="0 0 62 16"><g fill="#626262" stroke="#727272" stroke-width="1"><path d="M1 15 V1.5 H15 V7 H7 V15 Z"/><path d="M23 15 V1.5 H37 V5 H29 L27 15 Z"/><path d="M45 15 V1.5 H59 V15 H55 V6 H50 V15 Z" transform="translate(0,0)"/></g><path d="M20 0 V16 M41.5 0 V16" stroke="#565656" stroke-width="1"/></svg>
<svg style="left:833px;top:190px" width="16" height="15" viewBox="0 0 16 15"><path d="M1.5 13.5 H14 M1.5 13.5 L11.6 1.6 M8.6 13.2 A7.4 7.4 0 0 0 6.6 7.8" fill="none" stroke="#b8b8b8" stroke-width="1.2"/></svg>
<div class="abs" style="left:852.5px;top:190px;width:65px;height:17px;background:#5b595b;border-radius:2px"></div>
<svg style="left:903px;top:196px" width="9" height="6" viewBox="0 0 9 6"><path d="M1 1 L4.5 4.5 L8 1" fill="none" stroke="#6e6e6e" stroke-width="1.2"/></svg>
<svg style="left:832px;top:212px" width="18" height="18" viewBox="0 0 18 18"><g fill="none" stroke="#b8b8b8" stroke-width="1.1"><ellipse cx="11" cy="8.8" rx="5.8" ry="4"/><path d="M2.6 2.4 V15.6 M1 4.4 L2.6 2.2 L4.2 4.4 M1 13.6 L2.6 15.8 L4.2 13.6 M5.6 16.6 H16.6"/></g></svg>
<div class="abs" style="left:852.5px;top:214px;width:65px;height:17px;background:#5b595b;border-radius:2px"></div>
<svg style="left:903px;top:220px" width="9" height="6" viewBox="0 0 9 6"><path d="M1 1 L4.5 4.5 L8 1" fill="none" stroke="#6e6e6e" stroke-width="1.2"/></svg>

<!-- ===== brushes panel ===== -->
<div class="abs" style="left:988px;top:88px;width:216px;height:300px;background:#525052;border-radius:3px 3px 0 0;box-shadow:0 1px 3px rgba(0,0,0,.45), 0 0 0 1px rgba(40,40,40,.55)"></div>
<div class="abs" style="left:988px;top:88px;width:216px;height:37px;background:#464546;border-radius:3px 3px 0 0"></div>
<div class="abs" style="left:988px;top:88px;width:216px;height:12.5px;background:#414041;border-radius:3px 3px 0 0"></div>
<div class="abs" style="left:1048px;top:100px;width:45px;height:26px;background:#525052"></div>
<div class="sep" style="left:1153.5px;top:101px;height:24px;background:#3a3a3a"></div>
<svg style="left:1175px;top:91.5px" width="26" height="7" viewBox="0 0 26 7"><path d="M3 0.5 L0 3.5 L3 6.5 Z M6.6 0.5 L3.6 3.5 L6.6 6.5 Z" fill="#d4d4d4"/><path d="M18.2 0.8 L23.6 6.2 M23.6 0.8 L18.2 6.2" stroke="#d4d4d4" stroke-width="1.7"/></svg>
<div class="t" id="bp1" style="left:996.6px;top:107.5px;font-size:9.5px;font-weight:bold;color:#9c9c9c;transform:scaleX(0.976)">Образцы</div>
<div class="t" id="bp2" style="left:1056.6px;top:107.5px;font-size:9.5px;font-weight:bold;color:#f2f2f2;transform:scaleX(0.999)">Кисти</div>
<div class="t" id="bp3" style="left:1101.8px;top:107.5px;font-size:9.5px;font-weight:bold;color:#9c9c9c;transform:scaleX(0.950)">Символы</div>
<svg style="left:1188.5px;top:108.5px" width="10" height="9" viewBox="0 0 10 9"><path d="M0 1 H10 M0 4.5 H10 M0 8 H10" stroke="#bcbcbc" stroke-width="1.3"/></svg>
<div class="abs" style="left:992px;top:131px;width:206px;height:262px;border:1px solid #5a5a5a"></div>
<svg style="left:1187px;top:134px" width="8" height="5" viewBox="0 0 8 5"><path d="M1 4 L4 1 L7 4" fill="none" stroke="#5e5e5e" stroke-width="1"/></svg>
<div class="abs" style="left:993.5px;top:131.5px;width:30px;height:30.5px;background:#e6e6e6"></div>
<div class="abs" style="left:997px;top:135px;width:24px;height:24px;border-radius:50%;background:#2e3192"></div>
<div class="abs" style="left:993.5px;top:163.3px;width:29.5px;height:30px;background:#e6e6e6"></div>
<div class="abs" style="left:1025px;top:163.3px;width:29.5px;height:30px;background:#e6e6e6"></div>
<div class="abs" style="left:1056px;top:163.3px;width:29.5px;height:30px;background:#e6e6e6"></div>
<div class="abs" style="left:1087px;top:163.3px;width:29.5px;height:30px;background:#e6e6e6"></div>
<div class="abs" style="left:1118px;top:163.3px;width:29.5px;height:30px;background:#e6e6e6"></div>
<div class="abs" style="left:1007.2px;top:176.8px;width:2.6px;height:2.6px;border-radius:50%;background:#000"></div>
<div class="abs" style="left:1034.4px;top:173px;width:10px;height:10px;border-radius:50%;background:#000"></div>
<div class="abs" style="left:1070.5px;top:175px;width:1px;height:6px;background:#cfcfcf"></div>
<div class="abs" style="left:1095.5px;top:172.2px;width:11.6px;height:11.6px;border-radius:50%;background:#000"></div>
<div class="abs" style="left:1126.5px;top:172.2px;width:11.6px;height:11.6px;border-radius:50%;background:#000"></div>
<div class="abs" style="left:1000px;top:192.4px;width:16px;height:1px;background:#bdbdbd"></div>
<div class="abs" style="left:993.5px;top:194.2px;width:191.5px;height:30px;background:#e6e6e6"></div>
<div class="abs" style="left:998px;top:208px;width:144px;height:2px;background:#111"></div>
<div class="t" id="bp4" style="left:1145.4px;top:205px;font-size:9px;color:#111;transform:scaleX(1.017)">Базовая</div>
<div class="abs" style="left:993.5px;top:225.4px;width:191.5px;height:30px;background:#dcdcdc"></div>

<!-- ===== layers panel (bottom) ===== -->
<div class="abs" style="left:886px;top:560px;width:322px;height:96px;background:#525052;box-shadow:0 0 0 1px rgba(30,30,30,.6)"></div>
<div class="abs" style="left:891px;top:560px;width:312px;height:70px;border:1px solid #595959"></div>
<div class="abs" style="left:886px;top:648px;width:322px;height:1.5px;background:#333233"></div>
<div class="abs" style="left:1037px;top:650.5px;width:20px;height:4px;background:repeating-linear-gradient(90deg,#707070 0 1px,transparent 1px 2px)"></div>
<div class="t" id="ly1" style="left:891.0px;top:635px;font-size:9px;color:#e0e0e0;transform:scaleX(1.014)">1 слой</div>
<svg style="left:1048px;top:632px" width="136" height="15" viewBox="0 0 136 15">
 <g fill="none" stroke="#6a6a6a" stroke-width="1.1"><path d="M7 4 H2 V13 H11 V8"/><path d="M6 9 L12.4 2.4 M8.6 2 H12.8 V6.2"/></g>
 <circle cx="33.6" cy="5.8" r="4" fill="none" stroke="#f0f0f0" stroke-width="1.6"/><path d="M30.8 8.8 L26.6 13.4" stroke="#f0f0f0" stroke-width="2"/>
 <g fill="none" stroke="#666" stroke-width="1"><rect x="50" y="2" width="8" height="8"/><rect x="53" y="5" width="8" height="8"/></g><rect x="54.5" y="6.5" width="3" height="3" fill="#666"/>
 <g fill="#666"><rect x="80" y="4" width="8" height="8"/><path d="M73 2 V6.5 H78 V5 L80 7 L78 9 V7.6 H72 V2 Z"/></g>
 <path d="M99 1.6 H109.6 V12.6 H103 V6.6 H99 Z" fill="#f0f0f0"/><path d="M99 7.8 H101.8 V12.6 Z" fill="#f0f0f0"/>
 <g fill="none" stroke="#666" stroke-width="1"><path d="M124 4 H134 M125 4 L126 13.4 H132 L133 4 M127.4 2.2 H130.6 M127.6 6 V11.6 M130.4 6 V11.6"/></g>
</svg>
<!-- bottom status strip -->
<div class="abs" style="left:60px;top:665px;width:1158px;height:7px;background:#636363"></div>
<div class="abs" style="left:60px;top:664px;width:1158px;height:1px;background:#3d3d3d"></div>
<div class="abs" style="left:64px;top:666px;width:47px;height:6px;background:#505050"></div>
<div class="abs" style="left:167px;top:666px;width:37px;height:6px;background:#505050"></div>
<div class="abs" style="left:866px;top:666px;width:18px;height:6px;background:#6a6a6a;border-radius:3px 3px 0 0"></div>

<!-- ===== colour picker dialog ===== -->
<div class="abs" id="dlg" style="left:719px;top:231px;width:520px;height:370px;border-radius:6px 0 0 5px;background:#3a9ca4;box-shadow:0 0 0 1px rgba(20,30,34,.85), 0 3px 12px 3px rgba(0,0,0,.42)"></div>
<div class="abs" style="left:719px;top:231px;width:519px;height:28px;border-radius:5px 0 0 0;background:linear-gradient(90deg,#bfe9ea 0px,#c8eeee 30px,#bde8ea 85px,#86d6de 150px,#5cc6d4 230px,#4dc0d0 290px,#60cad8 330px,#47bbcc 400px,#52c2d0 450px,#6ed0dc 500px)"></div>
<div class="abs" style="left:719px;top:231px;width:519px;height:3px;border-radius:5px 0 0 0;background:linear-gradient(180deg,rgba(255,255,255,.45),rgba(255,255,255,0))"></div>
<div class="abs" style="left:719px;top:252px;width:519px;height:7px;background:linear-gradient(180deg,rgba(40,150,165,0),rgba(40,150,165,.35))"></div>
<div class="abs" style="left:719px;top:259px;width:6px;height:342px;border-radius:0 0 0 5px;background:linear-gradient(180deg,#8ed6dc 0px,#5cc0ca 50px,#3da2ac 160px,#36969e 342px)"></div>
<div class="abs" style="left:719px;top:259px;width:1.5px;height:336px;background:rgba(190,235,238,.55)"></div>
<div class="abs" style="left:723px;top:595px;width:515px;height:6px;background:linear-gradient(180deg,#3fa0a8,#66c6ce 45%,#43a2aa)"></div>
<div class="abs" id="dbody" style="left:725px;top:259px;width:520px;height:336px;background:#545253;border-radius:0 0 0 2px;box-shadow:0 0 0 1px rgba(34,60,64,.8)"></div>
<div class="t" id="d_title" style="left:726.4px;top:239px;font-size:11.5px;color:#142426;transform:scaleX(0.959)">Палитра цветов</div>
<div class="t" id="d_sel" style="left:739.8px;top:276px;font-size:11px;color:#b6b6b6;transform:scaleX(1.005)">Выбрать цвет:</div>
<div class="abs" style="left:740px;top:298px;width:239px;height:240px;background:linear-gradient(180deg,rgba(0,0,0,0) 0%,rgba(0,0,0,1) 100%),linear-gradient(90deg,#ffffff 0%,#80e000 100%)"></div>
<svg style="left:740px;top:298px;overflow:hidden" width="8" height="8" viewBox="0 0 8 8"><circle cx="0" cy="0" r="3.6" fill="none" stroke="#222" stroke-width="1.4"/></svg>
<svg style="left:963px;top:484px" width="20" height="20" viewBox="0 0 20 20"><circle cx="10" cy="10" r="6.6" fill="none" stroke="rgba(150,165,140,.6)" stroke-width="2"/></svg>
<div class="abs" style="left:996.5px;top:298px;width:25px;height:240px;background:linear-gradient(180deg,#ff1616 0%,#ff1616 1.5%,#ff20f0 16.7%,#1818ff 33.3%,#00e4ff 50%,#00c814 66.7%,#f2e400 83.3%,#f02000 98.5%,#f02000 100%)"></div>
<svg style="left:987px;top:474px" width="42" height="11" viewBox="0 0 42 11"><path d="M1.6 1.4 L8.6 5.4 L1.6 9.4 Z" fill="#c8c8c8"/><path d="M40.4 1.4 L33.6 5.4 L40.4 9.4 Z" fill="#c8c8c8"/></svg>
<div class="abs" style="left:1038px;top:293.5px;width:58px;height:75px;background:#ffffff;border:1px solid #2c2c2c"></div>
<!-- buttons -->
<div class="abs" style="left:1137px;top:294px;width:120px;height:24px;border:2px solid #f2f2f2;border-radius:12px"></div>
<div class="abs" style="left:1137px;top:321px;width:120px;height:24.5px;border:1.2px solid #cfcfcf;border-radius:12px"></div>
<div class="abs" style="left:1137px;top:348.5px;width:120px;height:24.5px;border:1.2px solid #cfcfcf;border-radius:12px"></div>
<div class="t" id="d_ok" style="left:1187.7px;top:300.5px;font-size:11px;color:#f0f0f0;transform:scaleX(0.899)">OK</div>
<div class="t" id="d_cn" style="left:1175.8px;top:328px;font-size:11px;color:#f0f0f0;transform:scaleX(0.981)">Отмена</div>
<div class="t" id="d_sw" style="left:1146.3px;top:355.5px;font-size:11px;color:#f0f0f0;transform:scaleX(1.003)">Цветовые образцы</div>
<svg style="left:1037.5px;top:385.5px" width="13" height="13" viewBox="0 0 13 13"><circle cx="6.5" cy="6.5" r="5.3" fill="none" stroke="#c9c9c9" stroke-width="1.3"/><circle cx="6.5" cy="6.5" r="4.6" fill="#d6d6d6"/><circle cx="6.5" cy="6.5" r="1.9" fill="#3a3a3a"/></svg>
<div class="t" id="d_l0" style="left:1054.6px;top:386.5px;font-size:11px;font-weight:bold;color:#ececec;transform:scaleX(0.948)">H:</div>
<div class="fld" style="left:1071px;top:383px;width:53px;height:18px;background:#3e3e3e;border:1px solid #4a4a4a"></div>
<div class="t" id="d_v0" style="left:1074.2px;top:386.5px;font-size:11.5px;color:#ececec;transform:scaleX(1.081)">90°</div>
<svg style="left:1037.5px;top:409.0px" width="13" height="13" viewBox="0 0 13 13"><circle cx="6.5" cy="6.5" r="5.3" fill="none" stroke="#c9c9c9" stroke-width="1.3"/></svg>
<div class="t" id="d_l1" style="left:1054.6px;top:410.0px;font-size:11px;font-weight:bold;color:#ececec;transform:scaleX(0.945)">S:</div>
<div class="fld" style="left:1071px;top:406.5px;width:53px;height:18px;background:#3e3e3e;border:1px solid #4a4a4a"></div>
<div class="t" id="d_v1" style="left:1074.2px;top:410.0px;font-size:11.5px;color:#ececec;transform:scaleX(1.077)">0%</div>
<svg style="left:1037.5px;top:432.5px" width="13" height="13" viewBox="0 0 13 13"><circle cx="6.5" cy="6.5" r="5.3" fill="none" stroke="#c9c9c9" stroke-width="1.3"/></svg>
<div class="t" id="d_l2" style="left:1054.6px;top:433.5px;font-size:11px;font-weight:bold;color:#ececec;transform:scaleX(0.896)">B:</div>
<div class="fld" style="left:1071px;top:430px;width:53px;height:18px;background:#3e3e3e;border:1px solid #4a4a4a"></div>
<div class="t" id="d_v2" style="left:1074.2px;top:433.5px;font-size:11.5px;color:#ececec;transform:scaleX(1.047)">100%</div>
<svg style="left:1037.5px;top:455.9px" width="13" height="13" viewBox="0 0 13 13"><circle cx="6.5" cy="6.5" r="5.3" fill="none" stroke="#c9c9c9" stroke-width="1.3"/></svg>
<div class="t" id="d_l3" style="left:1054.6px;top:456.9px;font-size:11px;font-weight:bold;color:#ececec;transform:scaleX(0.948)">R:</div>
<div class="fld" style="left:1071px;top:453.4px;width:53px;height:18px;background:#3e3e3e;border:1px solid #4a4a4a"></div>
<div class="t" id="d_v3" style="left:1074.2px;top:456.9px;font-size:11.5px;color:#ececec;transform:scaleX(1.016)">255</div>
<div class="t" id="d_c3" style="left:1136.6px;top:456.9px;font-size:11px;color:#c4c4c4;transform:scaleX(0.945)">C:</div>
<div class="fld" style="left:1151px;top:453.4px;width:53px;height:18px;background:#3e3e3e;border:1px solid #4a4a4a"></div>
<div class="t" id="d_k3" style="left:1155.0px;top:456.9px;font-size:11.5px;color:#ececec;transform:scaleX(1.053)">0%</div>
<svg style="left:1037.5px;top:479.3px" width="13" height="13" viewBox="0 0 13 13"><circle cx="6.5" cy="6.5" r="5.3" fill="none" stroke="#c9c9c9" stroke-width="1.3"/></svg>
<div class="t" id="d_l4" style="left:1054.6px;top:480.3px;font-size:11px;font-weight:bold;color:#ececec;transform:scaleX(0.981)">G:</div>
<div class="fld" style="left:1071px;top:476.8px;width:53px;height:18px;background:#3e3e3e;border:1px solid #4a4a4a"></div>
<div class="t" id="d_v4" style="left:1074.2px;top:480.3px;font-size:11.5px;color:#ececec;transform:scaleX(1.016)">255</div>
<div class="t" id="d_c4" style="left:1135.0px;top:480.3px;font-size:11px;color:#c4c4c4;transform:scaleX(0.981)">M:</div>
<div class="fld" style="left:1151px;top:476.8px;width:53px;height:18px;background:#3e3e3e;border:1px solid #4a4a4a"></div>
<div class="t" id="d_k4" style="left:1155.0px;top:480.3px;font-size:11.5px;color:#ececec;transform:scaleX(1.053)">0%</div>
<svg style="left:1037.5px;top:502.7px" width="13" height="13" viewBox="0 0 13 13"><circle cx="6.5" cy="6.5" r="5.3" fill="none" stroke="#c9c9c9" stroke-width="1.3"/></svg>
<div class="t" id="d_l5" style="left:1054.6px;top:503.7px;font-size:11px;font-weight:bold;color:#ececec;transform:scaleX(0.896)">B:</div>
<div class="fld" style="left:1071px;top:500.2px;width:53px;height:18px;background:#3e3e3e;border:1px solid #4a4a4a"></div>
<div class="t" id="d_v5" style="left:1074.2px;top:503.7px;font-size:11.5px;color:#ececec;transform:scaleX(1.016)">255</div>
<div class="t" id="d_c5" style="left:1138.5px;top:503.7px;font-size:11px;color:#c4c4c4;transform:scaleX(0.868)">Y:</div>
<div class="fld" style="left:1151px;top:500.2px;width:53px;height:18px;background:#3e3e3e;border:1px solid #4a4a4a"></div>
<div class="t" id="d_k5" style="left:1155.0px;top:503.7px;font-size:11.5px;color:#ececec;transform:scaleX(1.053)">0%</div>
<div class="t" id="d_hash" style="left:1039px;top:527.6px;font-size:10px;color:#a8a8a8">#</div>
<div class="abs" style="left:1049.5px;top:523.5px;width:75px;height:18.5px;background:#f4f8fc;border:1.5px solid #9ec4ea;border-radius:1px"></div>
<div class="abs" style="left:1054.6px;top:526.5px;width:35px;height:12.5px;background:#2f6fd2"></div>
<div class="t" id="d_hex" style="left:1055.6px;top:527.1px;font-size:11.5px;color:#b8d4ff;transform:scaleX(0.783)">FFFFFF</div>
<div class="t" id="d_c6" style="left:1137.0px;top:527.1px;font-size:11px;color:#c4c4c4;transform:scaleX(0.961)">K:</div>
<div class="fld" style="left:1151px;top:523.6px;width:53px;height:18px;background:#3e3e3e;border:1px solid #4a4a4a"></div>
<div class="t" id="d_k6" style="left:1155.0px;top:527.1px;font-size:11.5px;color:#ececec;transform:scaleX(1.053)">0%</div>

<div class="abs" style="left:740.5px;top:553.3px;width:11.4px;height:10.8px;border:1px solid #c4c4c4;border-radius:1px"></div>
<div class="t" id="d_web" style="left:757.0px;top:554px;font-size:11px;color:#e6e6e6;transform:scaleX(1.021)">Только Web-цвета</div>

<!-- ===== global bottom darkening (video overlay) ===== -->
<div class="abs" style="left:0;top:0;width:1218px;height:672px;pointer-events:none;background:linear-gradient(180deg,rgba(0,0,0,0) 0px,rgba(0,0,0,0) 428px,rgba(0,0,0,0.045) 480px,rgba(0,0,0,0.10) 525px,rgba(0,0,0,0.16) 570px,rgba(0,0,0,0.215) 604px,rgba(0,0,0,0.27) 640px,rgba(0,0,0,0.30) 672px)"></div>


</div>
</body>
</html>
